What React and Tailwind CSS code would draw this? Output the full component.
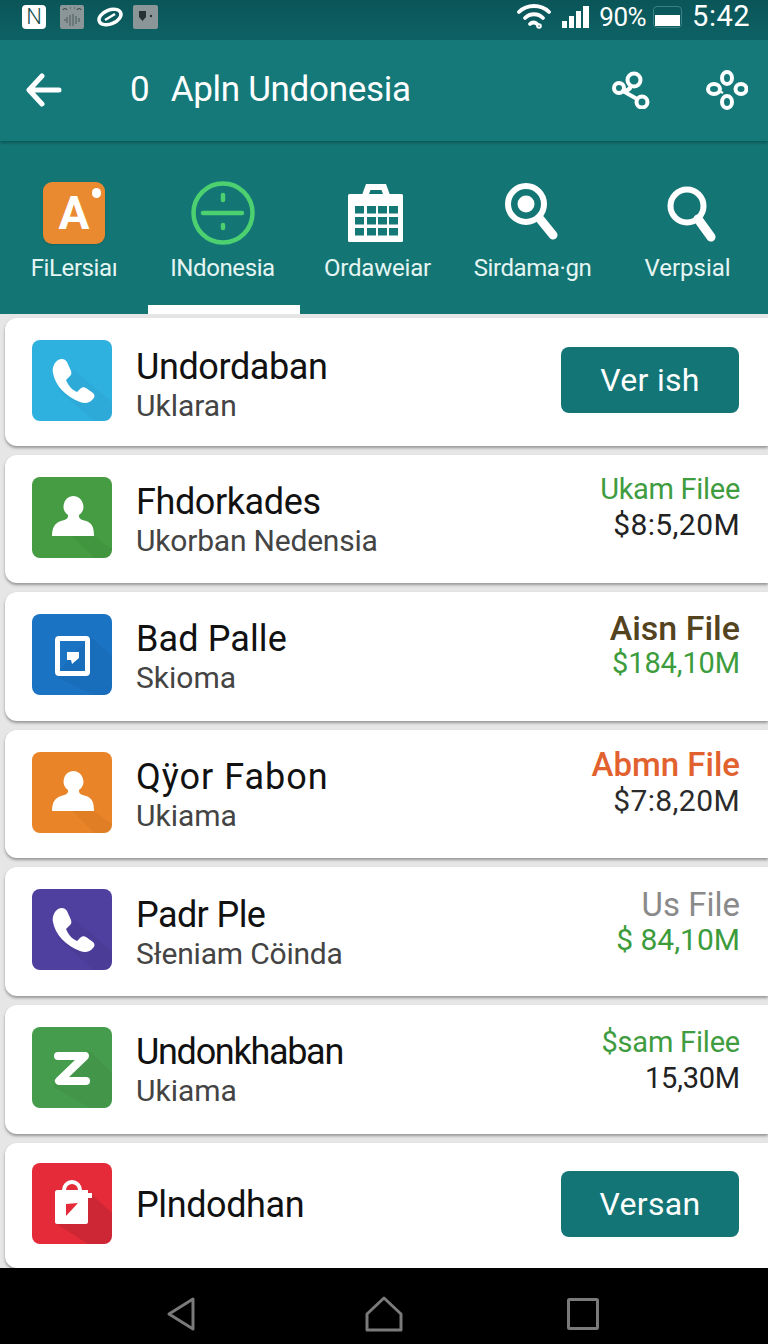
const phone = "M26 20c4-2 7-1 9 2l4 9c1 3 0 4-2 6l-3 3c2 5 6 10 11 12l3-3c2-2 4-2 6-1l7 5c2 2 2 4 0 6-3 4-8 5-13 3C34 57 23 45 21 33c-1-5 1-10 5-13z";
const person = "M41 19a10.500 10.500 0 0 1 6 19v1c0 3 3 4 7 5 6 2 8 6 8 15H20c0-9 3-13 9-15 4-1 7-2 7-5v-1a10.500 10.500 0 0 1 5-19z";

// long diagonal shade that falls from each glyph to the bottom right corner
const shades = {
  phone: 'M42 30L80 62V81H62L26 50z',
  person: 'M62 59L80 72V81H62L40 59z',
  square: 'M58 22L80 42V81H60L23 62z',
  z: 'M58 24L80 46V81H58L21 60z',
  bag: 'M55 27L80 50V81H56L23 60z',
};

function AppIcon({ kind }) {
  return (
    <svg viewBox="0 0 80 81" className="w-full h-full">
      <path d={shades[kind]} fill="#000" fillOpacity={kind === 'bag' ? 0.1 : 0.04} />
      {kind === 'phone' && <path d={phone} fill="#fff" />}
      {kind === 'person' && <path d={person} fill="#fff" />}
      {kind === 'square' && (
        <>
          <rect x="25.500" y="24.500" width="30" height="35" rx="1.500" fill="none" stroke="#fff" strokeWidth="5" />
          <path d="M35 38h12v6l-7 6-1-4h-4z" fill="#fff" />
        </>
      )}
      {kind === 'z' && <path d="M26 29H53L27 54H54" fill="none" stroke="#fff" strokeWidth="8" strokeLinecap="round" strokeLinejoin="round" />}
      {kind === 'bag' && (
        <>
          <path d="M32 28v-1a8 8 0 0 1 16 0v1" fill="none" stroke="#fff" strokeWidth="4" />
          <path d="M25 27h31v3h4v5h-4v24c0 1-1 2-2 2H25c-1 0-2-1-2-2V29c0-1 1-2 2-2z" fill="#fff" />
          <path d="M34 41l12-1-12 13z" fill="#e52b3a" />
        </>
      )}
    </svg>
  );
}

const rows = [
  { h: 'h-[128px]', icon: 'phone', box: 'bg-[#2fb1e0]', title: 'Undordaban', titleTrack: 'tracking-[-0.4px]', textTop: 'mt-[10px]', sub: 'Uklaran', button: 'Ver ish' },
  { h: 'h-[128px]', icon: 'person', box: 'bg-[#459c42]', title: 'Fhdorkades', titleTrack: 'tracking-[-0.4px]', textTop: 'mt-[6px]', sub: 'Ukorban Nedensia', subTrack: 'tracking-[-0.2px]', top: 'Ukam Filee', topColor: 'text-[29px] leading-[36px] tracking-[-0.3px] text-[#3f9c3f]', amount: '$8:5,20M', amountColor: 'text-[30px] tracking-[0.4px] text-[#222222]', valueTop: 'mt-[16px]' },
  { h: 'h-[129px]', icon: 'square', box: 'bg-[#1b73c4]', title: 'Bad Palle', titleTrack: 'tracking-[0.1px]', textTop: 'mt-[5px]', sub: 'Skioma', top: 'Aisn File', topColor: 'text-[34px] leading-[34px] text-[#54431f] font-medium', amount: '$184,10M', amountColor: 'text-[29px] tracking-[-0.1px] text-[#3c9c3c]', valueTop: 'mt-[19px]' },
  { h: 'h-[128px]', icon: 'person', box: 'bg-[#ea8428]', title: 'Qÿor Fabon', titleTrack: 'tracking-[1px]', textTop: 'mt-[6px]', sub: 'Ukiama', top: 'Abmn File', topColor: 'text-[33px] leading-[36px] text-[#e2622f] font-medium', amount: '$7:8,20M', amountColor: 'text-[30px] tracking-[0.4px] text-[#2b2b2b]', valueTop: 'mt-[17px]' },
  { h: 'h-[129px]', icon: 'phone', box: 'bg-[#4f3f9f]', title: 'Padr Ple', titleTrack: 'tracking-[-0.6px]', textTop: 'mt-[6px]', sub: 'Słeniam Cöinda', subTrack: 'tracking-[-0.2px]', top: 'Us File', topColor: 'text-[33px] leading-[34px] text-[#8a8a8a]', amount: '$ 84,10M', amountColor: 'text-[30px] text-[#3c9c3c]', valueTop: 'mt-[21px]' },
  { h: 'h-[129px]', icon: 'z', box: 'bg-[#459c4c]', title: 'Undonkhaban', titleTrack: 'tracking-[-1.3px]', textTop: 'mt-[4px]', sub: 'Ukiama', top: '$sam Filee', topColor: 'text-[29px] leading-[36px] tracking-[-0.2px] text-[#3f9c3f]', amount: '15,30M', amountColor: 'text-[29px] tracking-[-0.2px] text-[#222222]', valueTop: 'mt-[19px]' },
  { h: 'h-[125px]', icon: 'bag', box: 'bg-[#e52b3a]', title: 'Plndodhan', titleTrack: 'tracking-[-0.4px]', textTop: 'mt-[2px]', button: 'Versan' },
];

const tabs = [
  { label: 'FiLersiaı', labelClass: 'tracking-[-0.4px]' },
  { label: 'INdonesia', labelClass: 'tracking-[-0.4px] -ml-[3px]' },
  { label: 'Ordaweiar', labelClass: 'tracking-[-0.2px]' },
  { label: 'Sirdama·gn', labelClass: 'tracking-[-0.4px]' },
  { label: 'Verpsial', labelClass: 'tracking-[0px] -ml-[3px]' },
];

function TabIcon({ index }) {
  if (index === 0) {
    return (
      <div className="relative w-[62px] h-[62px] rounded-[9px] bg-[#ea8a30] shadow flex items-center justify-center">
        <span className="text-white text-[46px] font-bold leading-none">A</span>
        <span className="absolute top-[6px] right-[4px] w-[9px] h-[10px] rounded-full bg-white" />
      </div>
    );
  }
  if (index === 1) {
    return (
      <svg width="64" height="64" viewBox="0 0 64 64" fill="none" stroke="#4cd070" strokeLinecap="round" className="-ml-[2px]">
        <circle cx="32" cy="32" r="29.500" strokeWidth="4.500" />
        <path d="M12 32h39" strokeWidth="4.500" />
        <path d="M32 14v5M32 44v3" strokeWidth="4.500" />
      </svg>
    );
  }
  if (index === 2) {
    return (
      <svg width="56" height="60" viewBox="0 0 56 60" className="-ml-[3px]">
        <path fillRule="evenodd" d="M14 12l4-11h20l4 11zM21 11h14l-1.500-4h-11z" fill="#fff" />
        <rect x="0" y="11" width="55" height="48" rx="1.500" fill="#fff" />
        {[23, 34, 45].map(y =>
          [7, 19, 30, 41].map(x => (
            <rect key={`${x}-${y}`} x={x} y={y} width="9" height="7.500" fill="#147876" />
          ))
        )}
      </svg>
    );
  }
  if (index === 3) {
    return (
      <svg width="56" height="60" viewBox="0 0 56 60" fill="none" stroke="#fff" className="-ml-[3px]">
        <circle cx="23" cy="21" r="18" strokeWidth="6" />
        <circle cx="23" cy="21" r="8.500" fill="#fff" stroke="none" />
        <path d="M37 36l13 16" strokeWidth="9" strokeLinecap="round" />
      </svg>
    );
  }
  return (
    <svg width="52" height="60" viewBox="0 0 52 60" fill="none" stroke="#fff" className="mt-[3px] ml-[4px]">
      <circle cx="22" cy="21" r="16.500" strokeWidth="6" />
      <path d="M33 34l13 18" strokeWidth="9" strokeLinecap="round" />
    </svg>
  );
}

export default function App() {
  return (
    <div className="w-[768px] h-[1344px] overflow-hidden flex flex-col bg-[#e6e6e6] font-['Roboto',sans-serif]">
      {/* status bar */}
      <div className="h-[40px] shrink-0 flex items-center justify-between pl-[22px] pr-[18px] pb-[7px] bg-gradient-to-b from-[#0a5558] to-[#0d6265] text-white">
        <div className="flex items-center">
          <div className="w-[24px] h-[24px] rounded-sm bg-white text-[#17504f] text-[22px] leading-[24px] text-center font-light">N</div>
          <svg width="24" height="24" viewBox="0 0 24 24" className="ml-[14px]">
            <rect width="24" height="24" rx="2" fill="#8b9698" />
            <path d="M4 15h2M7 12v6M10 10v11M13 9v12M16 11v8M19 13v4" stroke="#5f6e6e" strokeWidth="1.500" />
            <path d="M3 5c1-2 3-2 4 0M17 5c1-2 3-2 4 0M10 3h1M14 3h1" fill="none" stroke="#3c4a4a" strokeWidth="1.200" />
          </svg>
          <svg width="28" height="22" viewBox="0 0 28 22" className="ml-[12px]" fill="none" stroke="#fff" strokeWidth="3.500">
            <ellipse cx="14" cy="11" rx="11.500" ry="7" transform="rotate(-22 14 11)" />
            <path d="M9 14l10-6" strokeWidth="2.500" />
          </svg>
          <svg width="25" height="24" viewBox="0 0 25 24" className="ml-[9px]">
            <rect width="25" height="24" rx="2" fill="#8b9698" />
            <path d="M6 6h7v6l-3.500 4L6 12z" fill="#263234" />
            <circle cx="18" cy="11" r="1.200" fill="#263234" />
          </svg>
        </div>
        <div className="flex items-center">
          <svg width="34" height="26" viewBox="0 0 34 26" fill="none" stroke="#fff" strokeWidth="3.800" strokeLinecap="round">
            <path d="M2 8c8-8 22-8 30 0" />
            <path d="M8 14c5-5 13-5 18 0" />
            <path d="M13 20c2-2 5-2 7 0" />
            <circle cx="22" cy="22" r="1.800" strokeWidth="2" />
          </svg>
          <div className="ml-[11px] flex items-end gap-[2px] h-[22px]">
            <span className="w-[5px] h-[7px] bg-white" />
            <span className="w-[5px] h-[12px] bg-white" />
            <span className="w-[5px] h-[17px] bg-white" />
            <span className="w-[6px] h-[22px] bg-white" />
          </div>
          <span className="ml-[10px] text-[26px] leading-none tracking-[-0.5px]">90%</span>
          <div className="ml-[7px] w-[29px] h-[22px] border border-[#3c8183] rounded-sm flex items-end p-[1px]">
            <div className="w-full h-[11px] bg-white" />
          </div>
          <span className="ml-[10px] text-[29px] leading-none tracking-[0.5px]">5:42</span>
        </div>
      </div>

      {/* app bar */}
      <div className="h-[101px] shrink-0 flex items-center pl-[26px] pr-[20px] pb-[2px] bg-[#15797a] text-white shadow-[0_2px_3px_rgba(0,50,50,0.45)] z-10">
        <svg width="36" height="34" viewBox="0 0 36 34" fill="none" stroke="#fff" strokeWidth="5" strokeLinecap="round" strokeLinejoin="round">
          <path d="M33 17H4M16 3L3 17l13 14" />
        </svg>
        <span className="ml-[68px] text-[35px] leading-none">0</span>
        <span className="ml-[21px] text-[35px] leading-none tracking-[-0.3px] flex-1">Apln Undonesia</span>
        <svg width="38" height="38" viewBox="0 0 38 38" fill="none" stroke="#fff" strokeWidth="4">
          <circle cx="22" cy="9" r="6.500" />
          <circle cx="7" cy="17" r="5" />
          <circle cx="30" cy="31" r="5.500" />
          <path d="M19 15c-1 3-4 5-8 5l14 8" strokeLinejoin="round" />
        </svg>
        <svg width="42" height="40" viewBox="0 0 42 40" fill="none" stroke="#fff" strokeWidth="4" className="ml-[56px]">
          <ellipse cx="21" cy="8" rx="5" ry="6" />
          <ellipse cx="21" cy="32" rx="5" ry="6" />
          <ellipse cx="8" cy="19" rx="6" ry="5" />
          <ellipse cx="35" cy="19" rx="5.500" ry="5" />
          <path d="M13 21l4 2" strokeWidth="2.500" />
        </svg>
      </div>

      {/* tabs */}
      <div className="h-[173px] shrink-0 grid grid-cols-[148px_152px_155px_155px_158px] bg-[#147674]">
        {tabs.map((tab, i) => (
          <div key={tab.label} className={`flex flex-col items-center pt-[40px] border-b-[9px] ${i === 1 ? 'border-white' : 'border-transparent'}`}>
            <div className="h-[64px] flex items-center justify-center"><TabIcon index={i} /></div>
            <span className={`mt-[7px] text-[24px] leading-[32px] text-[#e4f5f3] whitespace-nowrap ${tab.labelClass}`}>{tab.label}</span>
          </div>
        ))}
      </div>

      {/* list */}
      <div className="flex-1 flex flex-col gap-[9px] pt-[4px] pl-[5px] overflow-hidden">
        {rows.map(row => (
          <div key={row.title} className={`${row.h} shrink-0 bg-white rounded-l-xl shadow-[0_2px_3px_rgba(0,0,0,0.35)] flex items-center pl-[27px] pr-[28px] pb-[4px]`}>
            <div className={`w-[80px] h-[81px] shrink-0 rounded-lg overflow-hidden ${row.box}`}><AppIcon kind={row.icon} /></div>
            <div className={`ml-[24px] flex-1 min-w-0 ${row.textTop}`}>
              <div className={`text-[36px] leading-[42px] text-[#111] ${row.titleTrack}`}>{row.title}</div>
              {row.sub && <div className={`text-[30px] leading-[36px] text-[#444] ${row.subTrack || ''}`}>{row.sub}</div>}
            </div>
            {row.button && (
              <div className="w-[178px] h-[66px] mr-px rounded-lg bg-[#137575] text-white text-[32px] tracking-[0.3px] flex items-center justify-center">{row.button}</div>
            )}
            {row.top && (
              <div className={`self-start text-right whitespace-nowrap ${row.valueTop}`}>
                <div className={row.topColor}>{row.top}</div>
                <div className={`leading-[36px] ${row.amountColor}`}>{row.amount}</div>
              </div>
            )}
          </div>
        ))}
      </div>

      {/* nav bar */}
      <div className="h-[76px] shrink-0 bg-black flex items-center pt-[16px]">
        <svg width="30" height="36" viewBox="0 0 30 36" fill="none" stroke="#7a7a7a" strokeWidth="3" strokeLinejoin="round" className="ml-[166px]">
          <path d="M27 3v30L3 18z" />
        </svg>
        <svg width="38" height="36" viewBox="0 0 38 36" fill="none" stroke="#7a7a7a" strokeWidth="3" strokeLinejoin="round" className="ml-[169px]">
          <path d="M2 18L19 2l17 16v16H2z" />
        </svg>
        <svg width="32" height="32" viewBox="0 0 32 32" fill="none" stroke="#7a7a7a" strokeWidth="3" className="ml-[164px]">
          <rect x="1.500" y="1.500" width="29" height="29" rx="1" />
        </svg>
      </div>
    </div>
  );
}
